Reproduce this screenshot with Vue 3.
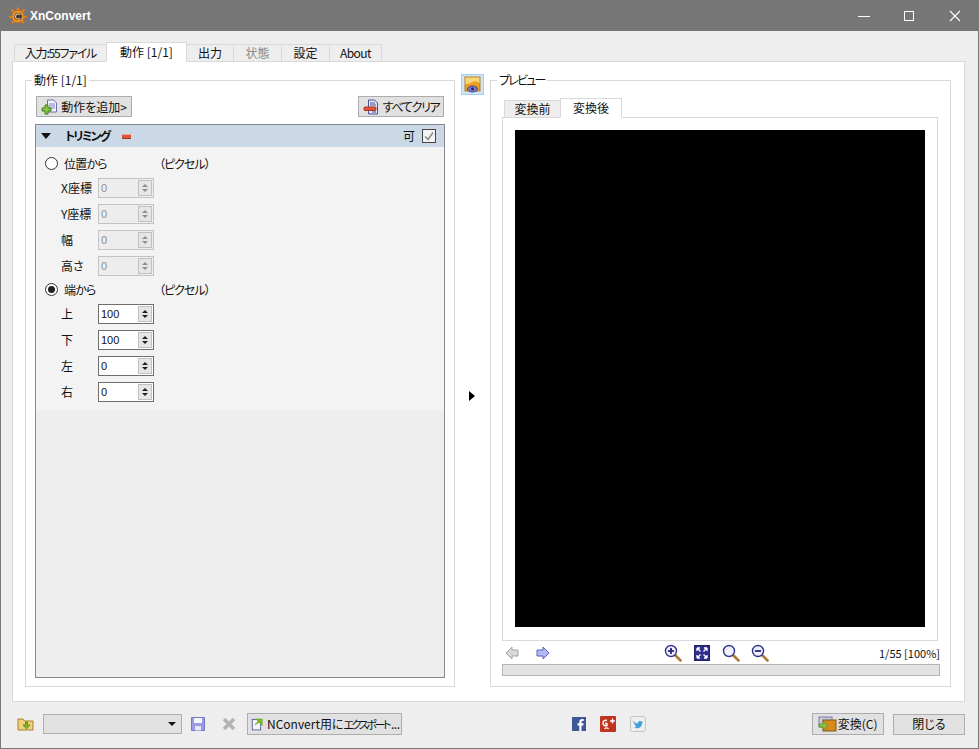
<template>
  <div class="window">
    <div class="titlebar">
      <svg class="logo" width="18" height="18" viewBox="0 0 18 18">
        <path d="M9 .5v4M2.500 2.500l3 3M15.500 2.500l-3 3M.5 10h3.500M14 10h3.500M3 16l3-3M15 16l-3-3" stroke="#e8801a" stroke-width="2.200" />
        <circle cx="9" cy="9.500" r="6" fill="#ef9a2e" stroke="#d96d10" />
        <circle cx="9" cy="9.500" r="3.800" fill="#3a3a3a" />
        <path d="M11 7.800a2.600 2.600 0 1 0 0 3.400" fill="none" stroke="#f5c070" stroke-width="1.300" />
      </svg>
      <span class="app-name">XnConvert</span>
      <span class="caption-btns">
        <svg width="14" height="14" viewBox="0 0 14 14"><path d="M2 7.500h12" stroke="#fff" /></svg>
        <svg width="14" height="14" viewBox="0 0 14 14"><rect x="2.500" y="2.500" width="9" height="9" fill="none" stroke="#fff" /></svg>
        <svg width="14" height="14" viewBox="0 0 14 14"><path d="M2 2l10 10M12 2L2 12" stroke="#fff" stroke-width="1.100" /></svg>
      </span>
    </div>

    <div class="client">
      <div class="tabs">
        <span v-for="t in mainTabs" :key="t.label" class="tab" :class="[t.cls, { active: t.active, off: t.off }]" :style="{ width: t.w + 'px' }">{{ t.label }}</span>
      </div>

      <div class="pane">
        <fieldset class="group left">
          <legend>動作 [1/1]</legend>
          <div class="toolbar">
            <button class="btn add">
              <svg width="18" height="16" viewBox="0 0 18 16">
                <path d="M6.500 1h6l3 3v9h-9z" fill="#f2f4fb" stroke="#6a6fa8" />
                <path d="M8 5h6M8 7h6M8 9h6" stroke="#7c82bd" />
                <path d="M4 6h3v3h3v3H7v3H4v-3H1V9h3z" fill="#8cc63e" stroke="#3f7d1c" />
              </svg>
              動作を追加&gt;
            </button>
            <button class="btn clear">
              <svg width="18" height="16" viewBox="0 0 18 16">
                <path d="M5.500 1h6l3 3v11h-9z" fill="#e4e6f6" stroke="#4d4f96" />
                <path d="M7 4h5M7 6h6M9 13h4" stroke="#4d4f96" />
                <rect x="1" y="8" width="12" height="3.500" rx="1" fill="#e0563a" stroke="#a3331e" />
              </svg>
              <span class="kana-clear">すべてクリア</span>
            </button>
          </div>

          <div class="panel">
            <div class="panel-head">
              <span class="tri"></span>
              <span class="head-title">トリミング</span>
              <span class="minus"></span>
              <span class="enable">可</span>
              <span class="check">
                <svg width="12" height="12" viewBox="0 0 12 12"><path d="M2 6.500l3 3 5-7" fill="none" stroke="#8a8a8a" stroke-width="1.500" /></svg>
              </span>
            </div>
            <div class="panel-form">
              <div class="radio-row">
                <span class="radio"></span>
                <span class="radio-label">位置から</span>
                <span class="unit">（ピクセル）</span>
              </div>
              <div v-for="r in posRows" :key="r.label" class="field-row">
                <span class="field-label">{{ r.label }}</span>
                <span class="spin off"><span class="spin-val">{{ r.value }}</span><span class="spin-arrows"><i class="up"></i><i class="down"></i></span></span>
              </div>
              <div class="radio-row">
                <span class="radio on"></span>
                <span class="radio-label">端から</span>
                <span class="unit">（ピクセル）</span>
              </div>
              <div v-for="r in edgeRows" :key="r.label" class="field-row">
                <span class="field-label">{{ r.label }}</span>
                <span class="spin"><span class="spin-val">{{ r.value }}</span><span class="spin-arrows"><i class="up"></i><i class="down"></i></span></span>
              </div>
            </div>
          </div>
        </fieldset>

        <div class="splitter">
          <button class="preview-toggle">
            <svg width="17" height="17" viewBox="0 0 17 17">
              <rect x="1" y="1" width="15" height="14" fill="#f0a020" stroke="#b57a25" />
              <path d="M1.500 1.500h14V7q-4-3-7-1t-7 2z" fill="#f6d67a" />
              <ellipse cx="8.500" cy="13" rx="5" ry="3" fill="#7c7cc8" stroke="#45458e" />
              <circle cx="8.500" cy="13" r="1.400" fill="#23235e" />
            </svg>
          </button>
          <span class="split-arrow"></span>
        </div>

        <fieldset class="group right">
          <legend><span class="kana-legend">プレビュー</span></legend>
          <div class="inner-tabs">
            <span class="tab inner">変換前</span>
            <span class="tab inner active">変換後</span>
          </div>
          <div class="inner-pane">
            <div class="image"></div>
          </div>
          <div class="preview-bar">
            <svg width="14" height="14" viewBox="0 0 14 14"><path d="M7 1L1 7l6 6V10h6V4H7z" fill="#d8d8d8" stroke="#a5a5a5" /></svg>
            <svg class="next" width="14" height="14" viewBox="0 0 14 14"><path d="M7 1l6 6-6 6V10H1V4h6z" fill="#b4b8f0" stroke="#5a5fc0" /></svg>
            <span class="zooms">
              <svg v-for="z in zoomIcons" :key="z" width="18" height="18" viewBox="0 0 18 18">
                <template v-if="z !== 'fit'">
                  <path d="M11 11l5.500 5.500" stroke="#b07a3a" stroke-width="2.600" stroke-linecap="round" />
                  <circle cx="7" cy="7" r="5.500" fill="#eef0fb" stroke="#33338c" stroke-width="1.400" />
                  <path v-if="z === 'in' || z === 'out'" d="M4 7h6" stroke="#26267a" stroke-width="1.800" />
                  <path v-if="z === 'in'" d="M7 4v6" stroke="#26267a" stroke-width="1.800" />
                </template>
                <template v-else>
                  <rect x="1.500" y="1.500" width="15" height="15" fill="#30308e" stroke="#202060" />
                  <path d="M4 4l3.500 3.500M14 4l-3.500 3.500M4 14l3.500-3.500M14 14l-3.500-3.500M4 4h3M4 4v3M14 4h-3M14 4v3M4 14h3M4 14v-3M14 14h-3M14 14v-3" stroke="#fff" stroke-width="1.300" />
                </template>
              </svg>
            </span>
            <span class="page-info">1/55 [100%]</span>
          </div>
          <div class="progress"></div>
        </fieldset>
      </div>

      <div class="footer">
        <svg class="folder" width="17" height="16" viewBox="0 0 17 16">
          <path d="M1 3h5l1.500 2H16v9H1z" fill="#f2cf78" stroke="#a9812f" />
          <path d="M8.500 6v3H6l3.500 4 3.500-4h-2.500V6z" fill="#7ab82e" stroke="#4a7d17" stroke-width=".7" />
        </svg>
        <span class="combo"><i></i></span>
        <svg class="save" width="14" height="14" viewBox="0 0 14 14">
          <path d="M.5.5h13v13H.5z" fill="#9a9de0" stroke="#7478c4" />
          <rect x="3" y="1" width="8" height="5" fill="#f5f5fb" />
          <rect x="4" y="9" width="6" height="4.500" fill="#e6e7f6" />
        </svg>
        <svg class="del" width="14" height="14" viewBox="0 0 14 14"><path d="M2 2l10 10M12 2L2 12" stroke="#b4b4b4" stroke-width="3.600" /></svg>
        <button class="btn export">
          <svg width="16" height="16" viewBox="0 0 16 16">
            <rect x="1.500" y="2.500" width="10" height="12.500" fill="#f4f5fb" stroke="#4d4f8e" />
            <path d="M5 9l5-5M7 2.500h6v6z" stroke="#6fae22" fill="#8cc63e" stroke-width="1.600" />
          </svg>
          <span class="export-text">NConvert用に<span class="kana-export">エクスポート</span><span class="dots">...</span></span>
        </button>
        <span class="social">
          <svg width="14" height="14" viewBox="0 0 14 14">
            <rect width="14" height="14" fill="#3b5998" />
            <path d="M9.500 14V8.500h1.800l.3-2.200H9.500V5c0-.7.200-1.100 1.100-1.100h1.100V2c-.5-.1-1-.1-1.600-.1-1.700 0-2.800 1-2.800 2.800v1.600H5.500v2.200h1.800V14z" fill="#fff" />
          </svg>
          <svg width="16" height="16" viewBox="0 0 16 16">
            <rect width="16" height="16" rx="1" fill="#c1331f" />
            <path d="M7 4.500a2.800 2.800 0 1 0 0 5l-.2-2H5" fill="none" stroke="#fff" stroke-width="1.500" />
            <path d="M4.500 13c1-1.500 3.500-1.500 4 0" fill="none" stroke="#fff" stroke-width="1.200" />
            <path d="M10 5h5M12.500 2.500v5" stroke="#fff" stroke-width="1.300" />
          </svg>
          <svg width="16" height="16" viewBox="0 0 16 16">
            <rect x=".5" y=".5" width="15" height="15" rx="2" fill="#eeeeee" stroke="#c4c4c4" />
            <path d="M3 5c1.500 1.500 3 2.300 5 2.400-.3-2 2-3.200 3.300-1.800l1.500-.5-.8 1.300 1-.2-1 1c0 3-2.500 5-5 5-1.200 0-2.300-.3-3-.9 1 0 2-.3 2.700-.9-1 0-1.700-.5-2-1.400h.9c-1-.4-1.600-1.200-1.600-2.200l.9.300C3 6.500 2.700 5.800 3 5z" fill="#3f9fd8" />
          </svg>
        </span>
        <button class="btn convert">
          <svg width="19" height="16" viewBox="0 0 19 16">
            <rect x="1" y="1" width="13" height="10" fill="#c9cbe0" stroke="#7a7d9e" />
            <rect x="5" y="4" width="13" height="11" fill="#d98a1c" stroke="#7a5a20" />
            <path d="M1 8h4V5l4.500 4.500L5 14v-3H1z" fill="#8cc63e" stroke="#4f8a1c" stroke-width=".7" />
          </svg>
          変換(C)
        </button>
        <button class="btn close">閉じる</button>
      </div>
    </div>
  </div>
</template>

<script setup>
const mainTabs = [
  { label: '入力:55ファイル', w: 93, cls: 'tight' },
  { label: '動作 [1/1]', w: 81, active: true },
  { label: '出力', w: 47 },
  { label: '状態', w: 48, off: true },
  { label: '設定', w: 48 },
  { label: 'About', w: 52, cls: 'narrow' },
]

const posRows = [
  { label: 'X座標', value: '0' },
  { label: 'Y座標', value: '0' },
  { label: '幅', value: '0' },
  { label: '高さ', value: '0' },
]

const edgeRows = [
  { label: '上', value: '100' },
  { label: '下', value: '100' },
  { label: '左', value: '0' },
  { label: '右', value: '0' },
]

const zoomIcons = ['in', 'fit', 'plain', 'out']
</script>

<style>
html, body { margin: 0; padding: 0; background: #eeeeee; }
</style>

<style scoped>
.window {
  width: 979px;
  height: 749px;
  box-sizing: border-box;
  border: 1px solid #787878;
  border-top: none;
  display: flex;
  flex-direction: column;
  background: #eeeeee;
  font-family: "Noto Sans CJK JP", "Liberation Sans", sans-serif;
  font-feature-settings: "palt";
  font-size: 12px;
  line-height: 16px;
  color: #111;
}

.titlebar {
  height: 31px;
  flex: none;
  background: #767676;
  display: flex;
  align-items: center;
  padding-left: 8px;
}
.logo { margin-right: 3px; }
.app-name {
  color: #fff;
  font-family: "Liberation Sans", sans-serif;
  font-weight: bold;
  font-size: 12px;
}
.caption-btns {
  margin-left: auto;
  display: flex;
  gap: 32px;
  padding-right: 16px;
}

.client {
  flex: 1;
  display: flex;
  flex-direction: column;
  padding: 0 13px 0 11px;
}

.tabs {
  display: flex;
  align-items: flex-end;
  height: 31px;
  padding-left: 2px;
  position: relative;
  z-index: 1;
  margin-bottom: -1px;
}
.tab {
  box-sizing: border-box;
  height: 18px;
  text-align: center;
  background: #eeeeee;
  border: 1px solid #d9d9d9;
  border-left-width: 0;
  line-height: 15px;
  white-space: nowrap;
}
.tab:first-child { border-left-width: 1px; }
.tab.active {
  height: 20px;
  background: #fff;
  border-bottom-color: #fff;
  border-left-width: 1px;
  margin-left: -1px;
  line-height: 18px;
}
.tab.off { color: #8a8a8a; }
.tab.tight { letter-spacing: -1.2px; }
.tab.narrow { letter-spacing: -.6px; }

.pane {
  height: 641px;
  box-sizing: border-box;
  background: #fff;
  border: 1px solid #d9d9d9;
  display: flex;
  align-items: flex-start;
  padding: 11px 0 0 12px;
}

.group {
  margin: 0;
  box-sizing: border-box;
  border: 1px solid #d9d9d9;
  min-width: 0;
  height: 614px;
}
.group legend {
  padding: 0 2px;
  line-height: 14px;
}
.left {
  width: 430px;
  padding: 9px 9px 8px 9px;
  display: flex;
  flex-direction: column;
}
.left legend { margin-left: -3px; }
.right {
  width: 461px;
  padding: 11px 11px 0 11px;
}
.right legend { margin-left: -5px; }
.kana-legend { letter-spacing: -1.8px; }

.toolbar {
  display: flex;
  justify-content: space-between;
  padding: 0 1px;
  margin-bottom: 7px;
}
.btn {
  box-sizing: border-box;
  height: 21px;
  display: inline-flex;
  align-items: center;
  justify-content: center;
  gap: 2px;
  padding: 0 2px;
  background: #e1e1e1;
  border: 1px solid #adadad;
  font: inherit;
  color: inherit;
  font-feature-settings: "palt";
  white-space: nowrap;
}
.add { width: 96px; }
.clear { width: 86px; }
.kana-clear { letter-spacing: -1.3px; }

.panel {
  flex: 1;
  border: 1px solid #84878b;
  background: #eeeeee;
  display: flex;
  flex-direction: column;
}
.panel-head {
  height: 22px;
  background: #cbd9e6;
  display: flex;
  align-items: center;
  padding: 0 8px 0 5px;
}
.tri {
  width: 0;
  height: 0;
  border-left: 5px solid transparent;
  border-right: 5px solid transparent;
  border-top: 6px solid #111;
}
.head-title {
  font-weight: bold;
  margin-left: 14px;
  width: 46px;
  white-space: nowrap;
  letter-spacing: -1.8px;
}
.minus {
  width: 9px;
  height: 3px;
  margin-left: 11px;
  background: #d9553a;
  border-top: 1px solid #f2a290;
  border-bottom: 1px solid #a23a24;
}
.enable { margin-left: auto; margin-right: 7px; }
.check {
  box-sizing: border-box;
  width: 14px;
  height: 14px;
  background: #f4f4f4;
  border: 1px solid #444;
  display: flex;
  align-items: center;
  justify-content: center;
}

.panel-form {
  background: #f3f3f3;
  height: 263px;
  box-sizing: border-box;
  padding: 6px 0 0 9px;
}
.radio-row, .field-row {
  height: 26px;
  display: flex;
  align-items: center;
}
.radio-row {
  height: 22px;
  box-sizing: border-box;
  padding-bottom: 1px;
}
.radio {
  box-sizing: border-box;
  width: 13px;
  height: 13px;
  border-radius: 50%;
  border: 1px solid #333;
  background: #fff;
  display: flex;
  align-items: center;
  justify-content: center;
}
.radio.on::after {
  content: "";
  width: 7px;
  height: 7px;
  border-radius: 50%;
  background: #222;
}
.radio-label {
  margin-left: 6px;
  width: 95px;
  white-space: nowrap;
  letter-spacing: -.8px;
}
.unit { letter-spacing: -1px; }
.field-label { margin-left: 16px; width: 37px; white-space: nowrap; }
.spin {
  box-sizing: border-box;
  width: 56px;
  height: 20px;
  background: #fff;
  border: 1px solid #6e6e6e;
  display: flex;
  align-items: center;
  justify-content: space-between;
  padding: 0 1px 0 2px;
  font-family: "Liberation Sans", sans-serif;
  font-size: 11px;
}
.spin.off {
  background: #ededed;
  border-color: #c4c4c4;
  color: #8f8f8f;
}
.spin-arrows {
  box-sizing: border-box;
  width: 14px;
  height: 16px;
  background: #e6e6e6;
  border: 1px solid #c0c0c0;
  display: flex;
  flex-direction: column;
  align-items: center;
  justify-content: center;
  gap: 2px;
}
.spin-arrows i {
  width: 0;
  height: 0;
  border-left: 3px solid transparent;
  border-right: 3px solid transparent;
}
.spin-arrows .up { border-bottom: 3px solid #222; }
.spin-arrows .down { border-top: 3px solid #222; }
.spin.off .up { border-bottom-color: #8f8f8f; }
.spin.off .down { border-top-color: #8f8f8f; }

.splitter {
  width: 35px;
  height: 630px;
  margin-top: 1px;
  display: flex;
  flex-direction: column;
  align-items: center;
  flex: none;
}
.preview-toggle {
  box-sizing: border-box;
  width: 23px;
  height: 21px;
  padding: 0;
  background: #cfe6f8;
  border: 1px solid #a6d0f0;
  display: flex;
  align-items: center;
  justify-content: center;
}
.split-arrow {
  margin-top: 296px;
  margin-right: 2px;
  width: 0;
  height: 0;
  border-top: 5px solid transparent;
  border-bottom: 5px solid transparent;
  border-left: 6px solid #000;
}

.inner-tabs {
  display: flex;
  align-items: flex-end;
  height: 20px;
  padding-left: 2px;
  margin-bottom: -1px;
  position: relative;
  z-index: 1;
}
.tab.inner { width: 57px; }
.tab.inner:first-child { border-left-width: 1px; }
.tab.inner.active { width: 62px; }
.inner-pane {
  box-sizing: border-box;
  width: 436px;
  height: 524px;
  border: 1px solid #d9d9d9;
  padding: 12px;
}
.image { width: 410px; height: 497px; background: #000; }

.preview-bar {
  height: 23px;
  width: 438px;
  display: flex;
  align-items: center;
  padding-left: 3px;
  box-sizing: border-box;
}
.next { margin-left: 17px; }
.zooms {
  display: flex;
  gap: 11px;
  margin-left: 114px;
}
.page-info {
  margin-left: auto;
  font-size: 11px;
  white-space: nowrap;
}
.progress {
  box-sizing: border-box;
  width: 438px;
  height: 12px;
  background: #e3e3e3;
  border: 1px solid #b5b5b5;
}

.footer {
  flex: 1;
  display: flex;
  align-items: center;
  padding-left: 5px;
  padding-bottom: 2px;
}
.folder { flex: none; }
.combo {
  box-sizing: border-box;
  width: 140px;
  height: 20px;
  margin-left: 9px;
  background: #e1e1e1;
  border: 1px solid #adadad;
  display: flex;
  align-items: center;
  justify-content: flex-end;
  padding-right: 5px;
}
.combo i {
  width: 0;
  height: 0;
  border-left: 4px solid transparent;
  border-right: 4px solid transparent;
  border-top: 4px solid #111;
}
.save { margin-left: 9px; flex: none; }
.del { margin-left: 17px; flex: none; }
.export {
  width: 155px;
  height: 22px;
  margin-left: 11px;
  justify-content: flex-start;
  padding: 0 1px 0 3px;
  gap: 3px;
}
.kana-export { letter-spacing: -2.400px; font-size: 11px; }
.dots { letter-spacing: -.5px; margin-left: 2px; }
.social {
  display: flex;
  align-items: center;
  gap: 14px;
  margin-left: 170px;
}
.convert { width: 73px; height: 22px; margin-left: 166px; gap: 1px; }
.close { width: 73px; height: 21px; margin-left: 9px; }
</style>
